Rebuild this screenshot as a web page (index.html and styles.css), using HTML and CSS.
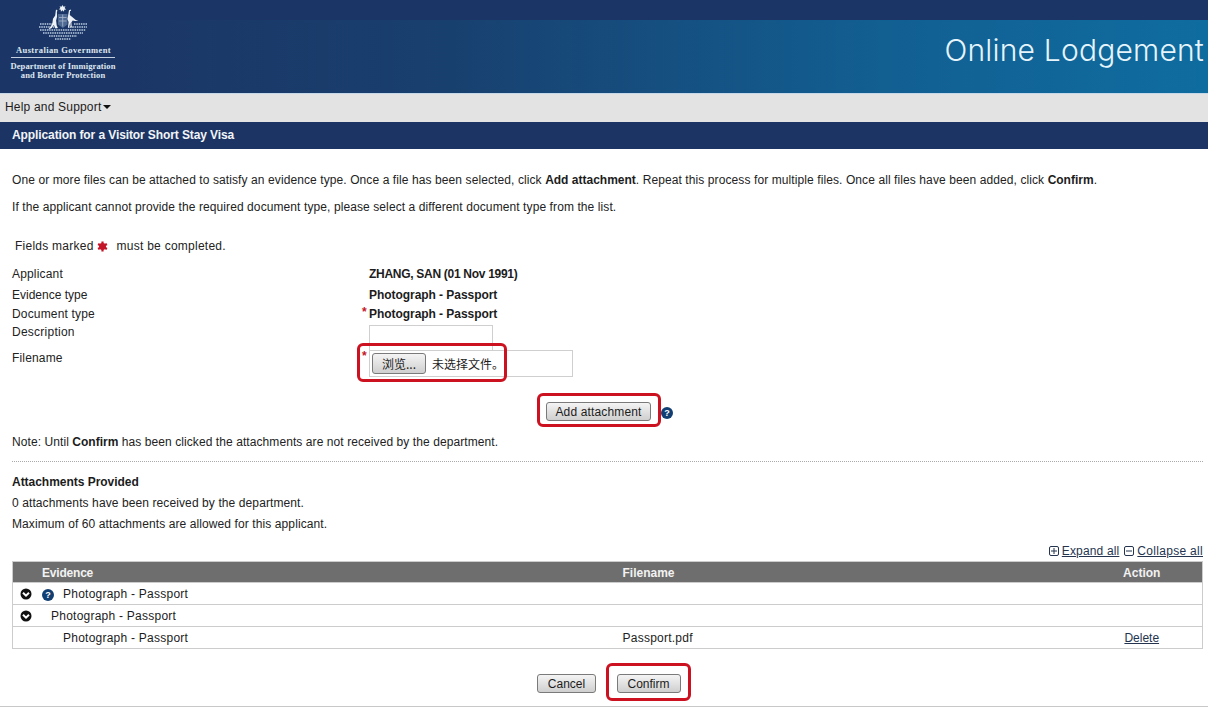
FILE: index.html
```html
<!DOCTYPE html>
<html lang="en">
<head>
<meta charset="utf-8">
<title>Online Lodgement</title>
<link rel="stylesheet" href="styles.css">
</head>
<body>
<header class="banner">
  <div class="brand">
    <svg class="crest" viewBox="0 0 50 38" aria-hidden="true">
      <path class="crest-f" d="M2 19h12M36 19h13M1 22h17M32 22h17M2 25h46M5 28h40M11 31h28M17 34h16"/>
      <path class="crest-w" d="M24.500 0l1 1.800 2-.6-.9 1.900 1.600 1.300-2 .3-.2 2-1.500-1.400-1.600 1.400-.1-2-2-.4 1.600-1.200-.8-1.900 1.900.6z"/>
      <path class="crest-g" d="M20 9h9.500v10.500l-4.700 3.500-4.800-3.500z"/>
      <path class="crest-l" d="M21 12.500h7.500M21 16h7.500M24.700 9.500v12"/>
      <path class="crest-w" d="M18 4.500l1.500 1-.6 1.600.2 4.500-1 3.800.6 5 1.200 2.600-2.400.4-1.700-3.400-2.400 3.200-3.200 1.400 2.600-3 1.600-3.600.6-4.200 2.200-3.200.4-3.400z"/>
      <path class="crest-w" d="M31 5.200l1.600-.6.6 1-1.200.7-.2 3.600 2.400 2.200 3.600 2.800 2.600 1.200-3.400-.2-2.200-.5-1.400 1.800.3 4.500 1.500.5h-2.600l-.3-4.800-1.100 4.800 1.200.5h-2.500l.7-5.600-1.200-3.200.6-2.800z"/>
    </svg>
    <div class="gov">Australian Government</div>
    <div class="dept">Department of Immigration<br>and Border Protection</div>
  </div>
  <div class="lodgement-band">
    <div class="lodgement">Online Lodgement</div>
  </div>
</header>
<nav class="helpbar">Help and Support<span class="caret"></span></nav>
<div class="titlebar">Application for a Visitor Short Stay Visa</div>
<main class="content">
  <p class="intro">One or more files can be attached to satisfy an evidence type. Once a file has been selected, click <b>Add attachment</b>. Repeat this process for multiple files. Once all files have been added, click <b>Confirm</b>.</p>
  <p class="intro second">If the applicant cannot provide the required document type, please select a different document type from the list.</p>
  <p class="fields-note">Fields marked<svg class="req-star" viewBox="0 0 12 12" aria-hidden="true"><path d="M6 .5v11M1.200 3.200l9.600 5.600M1.200 8.800l9.600-5.600"/><circle cx="6" cy="6" r="2.600"/></svg>must be completed.</p>

  <div class="form">
    <div class="row r-applicant"><span>Applicant</span><b>ZHANG, SAN (01 Nov 1991)</b></div>
    <div class="row r-evidence"><span>Evidence type</span><b>Photograph - Passport</b></div>
    <div class="row r-doc"><span>Document type</span><b><i class="mini-req">*</i>Photograph - Passport</b></div>
    <div class="row r-desc"><span>Description</span><div class="desc-input"></div></div>
    <div class="row r-file">
      <span>Filename</span>
      <div class="file-wrap">
        <i class="mini-req file-req">*</i>
        <div class="file-box"><span class="btn browse">浏览...</span><span class="nofile">未选择文件。</span></div>
        <div class="file-mark"></div>
      </div>
    </div>
  </div>

  <div class="add-row">
    <div class="redbox add-box"><span class="btn add-btn">Add attachment</span></div>
    <svg class="help add-help" viewBox="0 0 12 12" aria-hidden="true"><circle cx="6" cy="6" r="6"/><text x="6" y="9.300" text-anchor="middle">?</text></svg>
  </div>
  <p class="note">Note: Until <b>Confirm</b> has been clicked the attachments are not received by the department.</p>
  <hr class="dots">
  <p class="att-title"><b>Attachments Provided</b></p>
  <p class="att-line">0 attachments have been received by the department.</p>
  <p class="att-line">Maximum of 60 attachments are allowed for this applicant.</p>

  <div class="expand-row">
    <svg class="tree" viewBox="0 0 10 10" aria-hidden="true"><rect x=".5" y=".5" width="9" height="9" rx="1.500"/><path d="M2 5h6M5 2v6"/></svg><a href="#" class="expand-link">Expand all</a>
    <svg class="tree tree-two" viewBox="0 0 10 10" aria-hidden="true"><rect x=".5" y=".5" width="9" height="9" rx="1.500"/><path d="M2 5h6"/></svg><a href="#" class="collapse-link">Collapse all</a>
  </div>

  <table class="grid">
    <thead>
      <tr><th class="c-ev">Evidence</th><th class="c-file">Filename</th><th class="c-act">Action</th></tr>
    </thead>
    <tbody>
      <tr>
        <td class="c-ev"><div class="cell">
          <svg class="chev" viewBox="0 0 12 12" aria-hidden="true"><circle cx="6" cy="6" r="5.500"/><path d="M3 4.700l3 3 3-3"/></svg>
          <svg class="help row-help" viewBox="0 0 12 12" aria-hidden="true"><circle cx="6" cy="6" r="6"/><text x="6" y="9.300" text-anchor="middle">?</text></svg>
          <span>Photograph - Passport</span></div></td>
        <td class="c-file"></td><td class="c-act"></td>
      </tr>
      <tr>
        <td class="c-ev"><div class="cell">
          <svg class="chev" viewBox="0 0 12 12" aria-hidden="true"><circle cx="6" cy="6" r="5.500"/><path d="M3 4.700l3 3 3-3"/></svg>
          <span class="level-two">Photograph - Passport</span></div></td>
        <td class="c-file"></td><td class="c-act"></td>
      </tr>
      <tr>
        <td class="c-ev"><div class="cell"><span class="level-three">Photograph - Passport</span></div></td>
        <td class="c-file">Passport.pdf</td><td class="c-act"><a href="#">Delete</a></td>
      </tr>
    </tbody>
  </table>

  <div class="actions">
    <span class="btn cancel">Cancel</span>
    <div class="redbox confirm-box"><span class="btn confirm">Confirm</span></div>
  </div>
</main>
</body>
</html>
```
FILE: styles.css
```css
* { box-sizing: border-box; }
html, body { margin: 0; height: 707px; overflow: hidden; }
body {
  background: #fff;
  color: #222;
  font: 12px/16px "Liberation Sans", Arial, sans-serif;
  border-bottom: 1px solid #c8c8c8;
}
p { margin: 0; }
b { color: #1c1c1c; }

.banner {
  height: 94px;
  background: #1b3666;
  display: flex;
  border-bottom: 1px solid #c4d8ea;
}
.brand {
  width: 127px;
  flex: none;
  color: #dfe6f0;
  font-family: "Liberation Serif", serif;
  font-weight: bold;
  text-align: center;
}
.crest { display: block; width: 50px; height: 38px; margin: 5px 0 0 38px; }
.crest-w { fill: #eef2f7; }
.crest-g { fill: #4f6a92; }
.crest-f { fill: none; stroke: #93a6c2; stroke-width: 2; stroke-dasharray: 1.500 .8; }
.crest-l { fill: none; stroke: #a9b8ce; stroke-width: .8; }
.gov {
  width: 127px;
  font-size: 8.500px;
  line-height: 13px;
  letter-spacing: .4px;
  margin-top: 1px;
  height: 13px;
}
.dept {
  width: 104px;
  margin: 0 0 0 11px;
  padding-top: 4px;
  border-top: 1px solid #c4d0e0;
  font-size: 8.500px;
  line-height: 9px;
  letter-spacing: .15px;
  white-space: nowrap;
  display: flex;
  justify-content: center;
  text-align: center;
}
.lodgement-band {
  flex: 1;
  margin-top: 20px;
  background: linear-gradient(90deg, #1b3666 0%, #18406f 30%, #125f92 70%, #0f6c9f 100%);
  display: flex;
  justify-content: flex-end;
  align-items: flex-start;
}
.lodgement {
  color: #e6f5fb;
  font: 300 30px/60px Inter, sans-serif;
  letter-spacing: .2px;
  padding-right: 4px;
}

.helpbar {
  height: 28px;
  background: #e4e3e3;
  padding: 4px 0 0 5px;
  line-height: 18px;
  color: #1c1c1c;
  letter-spacing: .19px;
  display: flex;
  align-items: flex-start;
}
.caret {
  width: 0;
  height: 0;
  margin: 7px 0 0 2px;
  border-left: 4px solid transparent;
  border-right: 4px solid transparent;
  border-top: 4px solid #111;
}
.titlebar {
  height: 27px;
  background: #1b3464;
  color: #f2f4f8;
  font-weight: bold;
  line-height: 26px;
  padding-left: 12px;
  letter-spacing: -.1px;
}

.content { padding: 23px 5px 0 12px; }
.intro { letter-spacing: .095px; white-space: nowrap; }
.intro b { letter-spacing: 0; }
.second { margin-top: 11px; }
.fields-note {
  margin: 23px 0 12px 3px;
  display: flex;
  align-items: center;
  height: 16px;
  letter-spacing: .25px;
}
.req-star { width: 11px; height: 11px; margin: 0 9px 0 3px; fill: #c4162a; stroke: #c4162a; stroke-width: 2.400; }

.row { display: grid; grid-template-columns: 357px 1fr; align-items: start; }
.row > span { letter-spacing: .17px; }
.r-applicant { height: 21px; }
.r-applicant b { letter-spacing: -.29px; }
.r-evidence { height: 19px; }
.r-evidence > span { letter-spacing: 0; }
.r-evidence b, .r-doc b { letter-spacing: -.05px; }
.r-doc { height: 19px; }
.r-desc { height: 25px; }
.r-desc > span { margin-top: -1px; letter-spacing: .25px; }
.r-file { height: 26px; }
.mini-req {
  color: #c4162a;
  font: bold 12px/12px "Liberation Sans", sans-serif;
  display: inline-block;
  width: 7px;
  margin-left: -7px;
  vertical-align: 2px;
}
.desc-input { width: 124px; height: 25px; border: 1px solid #cfcfcf; border-bottom: 0; }
.file-wrap { position: relative; }
.file-req { position: absolute; left: 0; top: 0; }
.file-box {
  width: 204px;
  height: 27px;
  border: 1px solid #cfcfcf;
  padding: 2px 0 0 2px;
  display: flex;
  align-items: flex-start;
}
.file-mark {
  position: absolute;
  left: -12px;
  top: -7px;
  width: 150px;
  height: 39px;
  border: 3px solid #cc1220;
  border-radius: 6px;
}
.nofile { font-family: "Noto Sans CJK SC", sans-serif; margin-left: 6px; line-height: 21px; color: #1c1c1c; }
.btn {
  display: inline-block;
  height: 19px;
  line-height: 19px;
  border: 1px solid #7a7a7a;
  border-radius: 3px;
  background: linear-gradient(#f4f4f4, #cfcfcf);
  color: #1c1c1c;
  text-align: center;
  margin-top: 3px;
}
.browse { width: 54px; height: 21px; line-height: 19px; margin-top: 0; font-family: "Noto Sans CJK SC", sans-serif; }

.redbox {
  border: 3px solid #cc1220;
  border-radius: 6px;
  display: flex;
  align-items: center;
  justify-content: center;
}
.add-row { display: flex; justify-content: center; align-items: flex-end; margin: 17px 0 0 -6px; height: 34px; }
.add-box { width: 124px; height: 34px; }
.add-btn { width: 105px; letter-spacing: .15px; }
.help { fill: #123f73; }
.help text { fill: #fff; font: bold 9px "Liberation Sans", sans-serif; }
.add-help { width: 12px; height: 12px; margin: 0 0 8px 0; }
.note { margin-top: 7px; letter-spacing: .08px; }
.note b { letter-spacing: 0; }
.dots { border: 0; border-top: 1px dotted #aaa; margin: 11px 0 12px; height: 0; }
.att-title { height: 16px; margin-bottom: 5px; letter-spacing: -.03px; }
.att-line { height: 16px; margin-bottom: 5px; letter-spacing: .1px; }

.expand-row {
  margin-top: 11px;
  height: 16px;
  display: flex;
  justify-content: flex-end;
  align-items: center;
}
a { color: #24344f; text-decoration: underline; }
.expand-link { letter-spacing: .15px; }
.collapse-link { letter-spacing: .3px; }
.tree { width: 10px; height: 10px; margin-right: 3px; fill: none; stroke: #24344f; stroke-width: 1; }
.tree-two { margin-left: 5px; }

.grid {
  width: 1190px;
  margin-top: 2px;
  border-collapse: collapse;
  table-layout: fixed;
  border: 1px solid #ccc;
}
.grid th, .grid td { padding: 0; height: 22px; font-weight: normal; text-align: left; }
.grid td { letter-spacing: .24px; }
.grid th {
  background: #6f6e6e;
  color: #f2f2f2;
  font-weight: bold;
  height: 21px;
  padding-top: 1px;
}
th.c-ev { letter-spacing: -.2px; }
.grid td { border-top: 1px solid #ccc; }
.c-ev { width: 610px; }
th.c-ev { padding-left: 29px; }
.c-file { width: 459px; }
.grid .c-act { text-align: center; width: 121px; letter-spacing: 0; }
.cell { display: flex; align-items: center; padding-left: 7px; height: 21px; color: #1c1c1c; }
.chev { width: 12px; height: 12px; flex: none; }
.chev circle { fill: #111; }
.chev path { fill: none; stroke: #fff; stroke-width: 2; }
.row-help { width: 12px; height: 12px; margin: 2px 9px 0 10px; flex: none; }
.level-two { margin-left: 19px; }
.level-three { margin-left: 43px; }

.actions {
  display: flex;
  align-items: center;
  justify-content: center;
  margin: 14px 0 0 13px;
  gap: 10px;
}
.cancel { width: 59px; }
.confirm-box { width: 85px; height: 38px; }
.confirm { width: 64px; }
```
